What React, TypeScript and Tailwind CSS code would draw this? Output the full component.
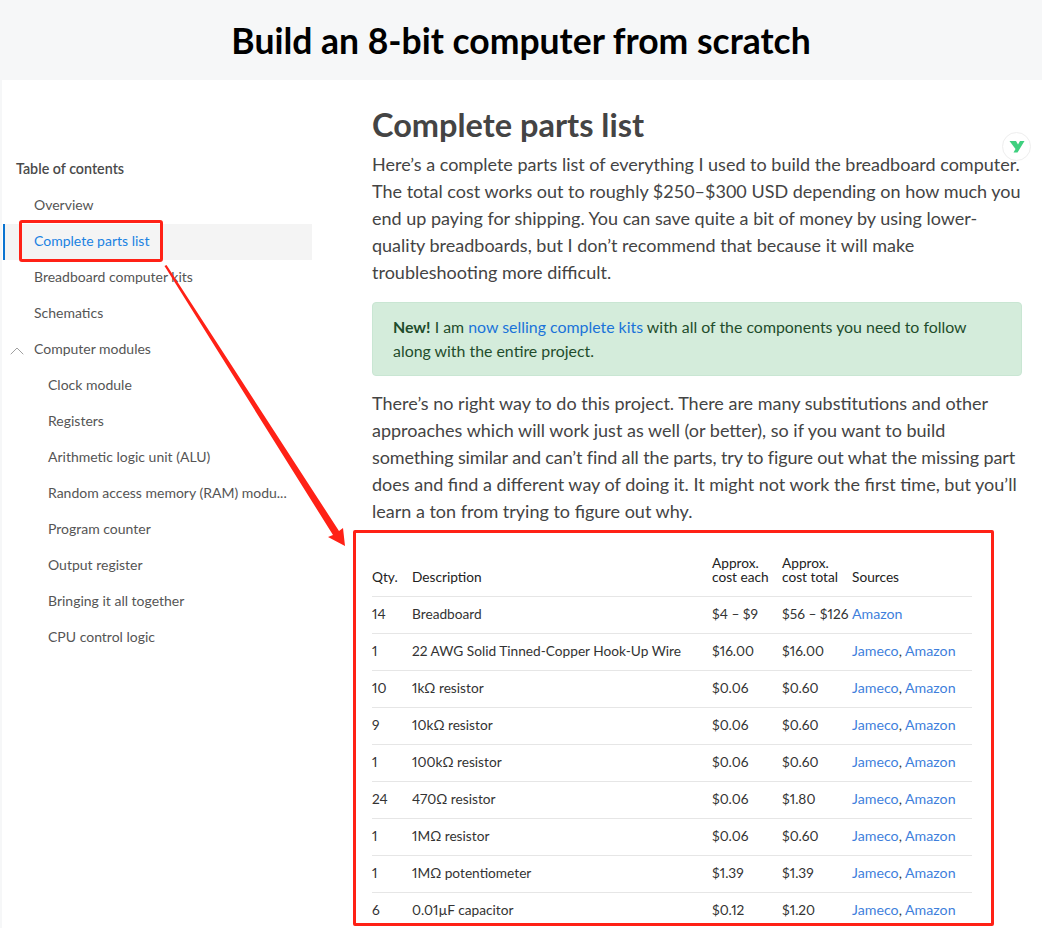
import { ChevronUp } from 'lucide-react';

const tocItems = [
  { label: 'Overview' },
  { label: 'Complete parts list', active: true },
  { label: 'Breadboard computer kits' },
  { label: 'Schematics' },
  { label: 'Computer modules', open: true },
  { label: 'Clock module', sub: true },
  { label: 'Registers', sub: true },
  { label: 'Arithmetic logic unit (ALU)', sub: true },
  { label: 'Random access memory (RAM) modu...', sub: true },
  { label: 'Program counter', sub: true },
  { label: 'Output register', sub: true },
  { label: 'Bringing it all together', sub: true },
  { label: 'CPU control logic', sub: true },
];

const parts = [
  ['14', 'Breadboard', '$4 – $9', '$56 – $126'],
  ['1', '22 AWG Solid Tinned-Copper Hook-Up Wire', '$16.00', '$16.00'],
  ['10', '1kΩ resistor', '$0.06', '$0.60'],
  ['9', '10kΩ resistor', '$0.06', '$0.60'],
  ['1', '100kΩ resistor', '$0.06', '$0.60'],
  ['24', '470Ω resistor', '$0.06', '$1.80'],
  ['1', '1MΩ resistor', '$0.06', '$0.60'],
  ['1', '1MΩ potentiometer', '$1.39', '$1.39'],
  ['6', '0.01µF capacitor', '$0.12', '$1.20'],
];

function Toc() {
  return (
    <aside className="ml-[1px] w-[309px] shrink-0 pt-[79px]">
      <h4 className="pl-[13px] text-[14.3px] leading-[20px] font-semibold text-[#4a4a4a]">Table of contents</h4>
      <ul className="mt-[9px]">
        {tocItems.map(item => (
          <li
            key={item.label}
            className={`relative flex h-[36px] items-center border-l-2 pb-[4px] text-[14px] ${
              item.active ? 'border-[#0a74d1] bg-[#f4f4f4] text-[#1a82e2]' : 'border-transparent text-[#555555]'
            } ${item.sub ? 'pl-[43px]' : 'pl-[29px]'}`}
          >
            {item.open && <ChevronUp size={24} strokeWidth={0.8} className="absolute left-[0px] top-[7px] text-[#888888]" />}
            {item.label}
          </li>
        ))}
      </ul>
    </aside>
  );
}

function PartsTable() {
  return (
    <table className="mt-[31px] w-[600px] table-fixed border-collapse text-[13.7px] text-[#333333] [font-variant-numeric:proportional-nums]">
      <colgroup>
        <col className="w-[40px]" />
        <col className="w-[300px]" />
        <col className="w-[70px]" />
        <col className="w-[70px]" />
        <col className="w-[120px]" />
      </colgroup>
      <thead>
        <tr className="border-b border-[#e6e6e6] text-left align-bottom leading-[14px] text-[#222222]">
          <th className="pb-[12px] font-normal">Qty.</th>
          <th className="pb-[12px] font-normal">Description</th>
          <th className="pb-[12px] font-normal">Approx.<br />cost each</th>
          <th className="pb-[12px] font-normal">Approx.<br />cost total</th>
          <th className="pb-[12px] font-normal">Sources</th>
        </tr>
      </thead>
      <tbody>
        {parts.map((row, i) => (
          <tr key={row[1]} className="h-[37px] border-b border-[#e6e6e6]">
            <td className="pb-[2px]">{row[0]}</td>
            <td className="pb-[2px]">{row[1]}</td>
            <td className="pb-[2px]">{row[2]}</td>
            <td className="whitespace-nowrap pb-[2px]">{row[3]}</td>
            <td className="whitespace-nowrap pb-[2px] text-[14.2px] text-[#3f7fdc]">
              {i === 0 ? 'Amazon' : <>Jameco<span className="text-[#333333]">,</span> Amazon</>}
            </td>
          </tr>
        ))}
      </tbody>
    </table>
  );
}

export default function App() {
  return (
    <div className="relative h-[928px] w-[1042px] overflow-hidden bg-white font-['Lato','Open_Sans',sans-serif]">
      <header className="flex h-[80px] items-center justify-center bg-[#f6f7f8] pt-[2px]">
        <h1 className="text-[35.5px] font-bold text-black">Build an 8-bit computer from scratch</h1>
      </header>
      <div className="flex border-l-2 border-[#f6f7f8]">
        <Toc />
        <main className="ml-[60px] w-[650px] shrink-0 pt-[24px]">
          <h2 className="text-[32.5px] leading-[42px] font-bold text-[#444444]">Complete parts list</h2>
          <p className="mt-[5px] text-[18px] leading-[27px] text-[#444444]">
            Here’s a complete parts list of everything I used to build the breadboard computer. The total cost works out to roughly $250–$300 USD depending on how much you end up paying for shipping. You can save quite a bit of money by using lower-quality breadboards, but I don’t recommend that because it will make troubleshooting more difficult.
          </p>
          <div className="mt-[16px] rounded-[4px] border border-[#c9e6d3] bg-[#d4ecdb] px-[20px] py-[12px] text-[15.9px] leading-[24px] text-[#1f4d2c]">
            <strong className="font-bold">New!</strong> I am <span className="text-[#1a73d9]">now selling complete kits</span> with all of the components you need to follow along with the entire project.
          </div>
          <p className="mt-[14px] text-[18px] leading-[27px] text-[#444444]">
            There’s no right way to do this project. There are many substitutions and other approaches which will work just as well (or better), so if you want to build{' '}
            <span className="tracking-[-0.12px]">something similar and can’t find all the parts, try to figure out what the missing part</span>{' '}
            does and find a different way of doing it. It might not work the first time, but you’ll learn a ton from trying to figure out why.
          </p>
          <PartsTable />
        </main>
      </div>

      {/* floating badge */}
      <div className="absolute left-[1002px] top-[132px] flex h-[29px] w-[29px] items-center justify-center rounded-full border border-[#eeeeee] bg-white">
        <svg width="16" height="13" viewBox="0 0 16 13">
          <path d="M0.5 1 L7 1 L9 4.5 L11 1 L15.5 1 L8.5 12.5 L4.5 12.5 L6.5 9 Z" fill="#3fd07f" />
        </svg>
      </div>

      {/* annotations */}
      <div className="absolute left-[19px] top-[220px] h-[42px] w-[144px] rounded-[3px] border-[3px] border-[#ff2116]" />
      <div className="absolute left-[353px] top-[530px] h-[396px] w-[641px] rounded-[2px] border-[3px] border-[#ff2116]" />
      <svg className="absolute left-0 top-0" width="1042" height="928">
        <path d="M164.5 266 L166.5 265 L339 531 L343 528 L345 546 L328 537 L333 535 Z" fill="#ff2116" />
      </svg>
    </div>
  );
}
